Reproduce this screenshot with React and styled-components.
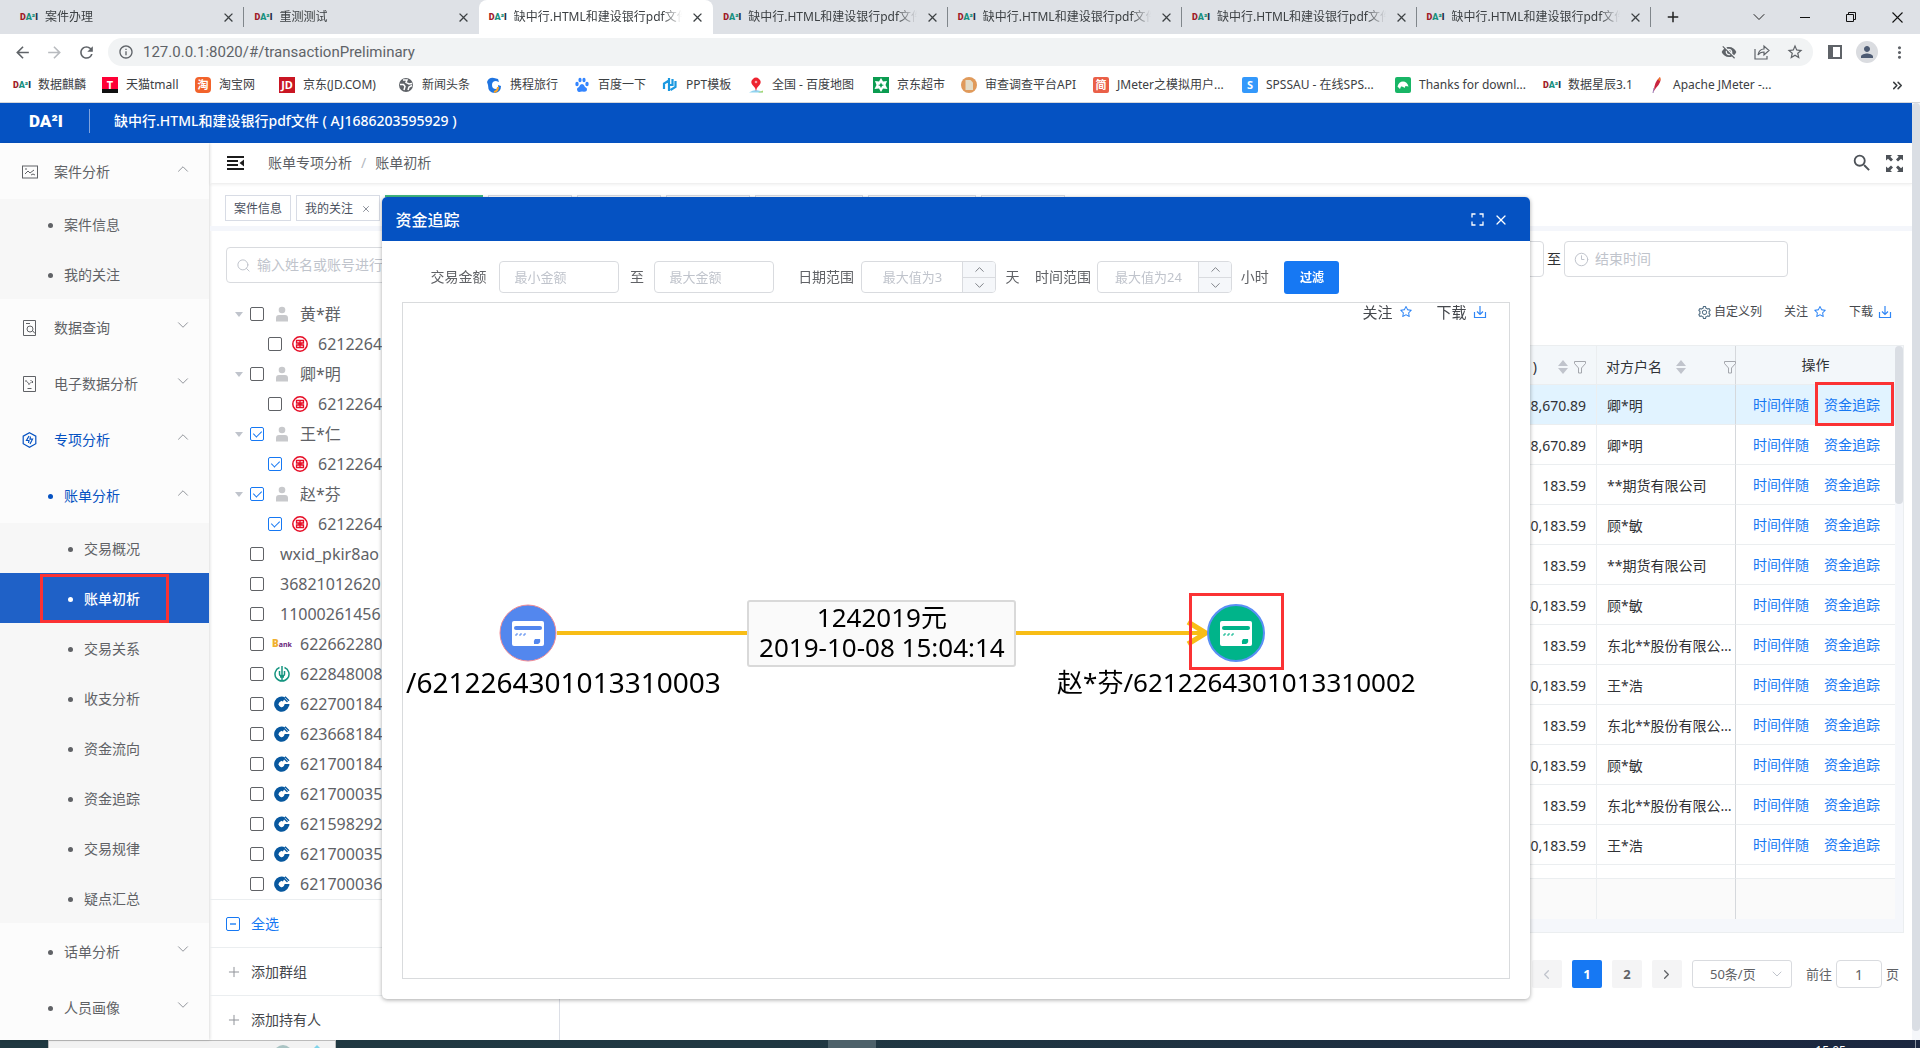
import React, { useState } from 'react';
import styled, { createGlobalStyle, css } from 'styled-components';
import {
  MdArrowBack, MdArrowForward, MdRefresh, MdInfoOutline, MdVisibilityOff, MdStarBorder,
  MdPerson, MdMoreVert, MdClose, MdAdd, MdSearch,
} from 'react-icons/md';
import { AiOutlineStar, AiOutlineSetting } from 'react-icons/ai';
import { ChevronDown, ChevronUp, ChevronLeft, ChevronRight, ChevronsRight, Plus, X, Clock3, Search } from 'lucide-react';

const BLUE = '#0552c2';
const LINK = '#1678f3';
const LINE = '#ebeef0';

const GlobalStyle = createGlobalStyle`
  * { box-sizing: border-box; }
  body {
    margin: 0;
    overflow: hidden;
    color: #606266;
    font-family: 'Noto Sans', 'Noto Sans CJK SC', sans-serif;
    font-size: 14px;
    line-height: 20px;
  }
  button, input, select { font: inherit; color: inherit; margin: 0; padding: 0; }
  button { border: 0; background: none; cursor: pointer; }
  a { color: inherit; text-decoration: none; }
  svg { flex: none; display: block; }
`;

const Page = styled.div`
  height: 100vh;
  display: flex;
  flex-direction: column;
  background: #fff;
`;

/* ---------- browser ---------- */

const TabStrip = styled.div`
  height: 34px;
  display: flex;
  padding-left: 10px;
  background: #dee1e6;
  color: #3c4043;
`;

const TabList = styled.div`
  flex: 1;
  min-width: 0;
  display: flex;
`;

const Tab = styled.div`
  flex: 1 1 0;
  min-width: 0;
  display: flex;
  align-items: center;
  gap: 8px;
  padding: 0 8px 0 10px;
  font-size: 12px;
  position: relative;
  ${(p) => p.$active && css`
    background: #fff;
    border-radius: 8px 8px 0 0;
  `}
  ${(p) => p.$divider && css`
    &::after {
      content: '';
      position: absolute;
      right: 0;
      top: 7px;
      height: 20px;
      border-right: 1px solid #80868b;
    }
  `}
`;

const TabTitle = styled.span`
  flex: 1;
  overflow: hidden;
  white-space: nowrap;
  mask-image: linear-gradient(to right, #000 88%, transparent);
`;

const WindowButtons = styled.div`
  width: 269px;
  display: flex;
  align-items: center;
  padding-left: 12px;
  color: #222;
`;

const WindowButton = styled.button`
  width: ${(p) => p.$w || 46}px;
  height: 28px;
  display: flex;
  align-items: center;
  justify-content: center;
  margin-left: ${(p) => p.$ml || 0}px;
`;

const AddressRow = styled.div`
  height: 34px;
  display: flex;
  align-items: center;
  padding: 4px 5px 2px 11px;
  color: #5f6368;
`;

const IconButton = styled.button`
  width: ${(p) => p.$w || 32}px;
  display: flex;
  justify-content: center;
  color: ${(p) => p.$color || 'inherit'};
`;

const Omnibox = styled.label`
  flex: 1;
  height: 28px;
  margin: 0 6px 0 11px;
  padding: 0 2px 0 10px;
  display: flex;
  align-items: center;
  gap: 9px;
  border-radius: 14px;
  background: #f1f3f4;
`;

const UrlInput = styled.input`
  flex: 1;
  border: 0;
  outline: 0;
  background: none;
  font-size: 15px;
  font-family: Roboto, 'Noto Sans', sans-serif;
`;

const Avatar = styled.span`
  width: 22px;
  height: 22px;
  border-radius: 50%;
  background: #dadce0;
  display: flex;
  align-items: center;
  justify-content: center;
`;

const BookmarkBar = styled.nav`
  height: 35px;
  display: flex;
  align-items: center;
  padding: 0 15px 0 13px;
  border-bottom: 1px solid #d5d7da;
  color: #3c4043;
  font-size: 12px;
`;

const Bookmark = styled.a`
  width: ${(p) => p.$w}px;
  display: flex;
  align-items: center;
  gap: 8px;
  white-space: nowrap;
`;

const Favicon = styled.span`
  width: 16px;
  height: 16px;
  flex: none;
  display: flex;
  align-items: center;
  justify-content: center;
  border-radius: ${(p) => p.$radius || 0}px;
  background: ${(p) => p.$bg || 'none'};
  color: ${(p) => p.$color || '#fff'};
  font-size: 11px;
  line-height: 16px;
  font-weight: 700;
`;

const LogoText = styled.span`
  width: ${(p) => (p.$light ? 33 : 17)}px;
  flex: none;
  font-family: Roboto, 'Liberation Sans', sans-serif;
  font-weight: 900;
  font-size: ${(p) => p.$size}px;
  line-height: 20px;
  white-space: nowrap;
  color: ${(p) => (p.$light ? '#fff' : '#1d2b45')};
  span:first-child { color: ${(p) => (p.$light ? '#fff' : '#a01c28')}; }
  span:last-child { color: ${(p) => (p.$light ? '#fff' : '#17907e')}; }
`;

const Logo = ({ size, light }) => (
  <LogoText $size={size} $light={light}><span>D</span><span>A²</span>I</LogoText>
);

const Filler = styled.span`
  flex: 1;
`;

/* ---------- app frame ---------- */

const AppArea = styled.div`
  flex: 1;
  min-height: 0;
  display: flex;
  position: relative;
`;

const AppBody = styled.div`
  flex: 1;
  min-width: 0;
  display: flex;
  flex-direction: column;
`;

const PageScroll = styled.div`
  width: 8px;
  background: #f5f7fa;
  padding-bottom: 9px;
  &::before {
    content: '';
    display: block;
    height: 100%;
    border-radius: 4px;
    background: #dadee4;
  }
`;

const AppHeader = styled.header`
  height: 40px;
  flex: none;
  display: flex;
  align-items: center;
  padding: 0 29px 4px;
  background: ${BLUE};
  color: #fff;
`;

const CaseTitle = styled.h1`
  margin: 0;
  padding-left: 24px;
  font-size: 14px;
  line-height: 24px;
  font-weight: 500;
`;

const HeaderDivider = styled.span`
  height: 24px;
  margin-left: 27px;
  border-left: 1px solid #7fa3de;
`;

const Columns = styled.div`
  flex: 1;
  min-height: 0;
  display: flex;
`;

const Sidebar = styled.nav`
  width: 209px;
  flex: none;
  overflow: hidden;
  background: #fcfcfc;
  box-shadow: 1px 0 3px rgba(0, 0, 0, 0.14);
`;

const MenuLink = styled.a`
  height: ${(p) => (p.$small ? 50 : 56)}px;
  display: flex;
  align-items: center;
  position: relative;
  padding: 2px 17px 0 ${(p) => p.$indent}px;
  background: ${(p) => (p.$active ? '#1f61c7' : p.$small ? '#f7f7f7' : 'none')};
  color: ${(p) => (p.$active ? '#fff' : p.$open ? BLUE : '#606266')};
  font-weight: ${(p) => (p.$active ? 500 : 400)};
`;

const MenuIcon = styled.span`
  width: 32px;
`;

const Dot = styled.span`
  width: 5px;
  height: 5px;
  margin-right: 11px;
  border-radius: 50%;
  background: currentColor;
`;

const MenuArrow = styled.span`
  margin: 0 0 6px auto;
  color: #909399;
`;

/* red frame drawn over a control */
const Marker = styled.span`
  position: absolute;
  inset: ${(p) => p.$inset};
  border: 3px solid #fb3234;
  pointer-events: none;
  z-index: 2;
`;

const Content = styled.div`
  flex: 1;
  min-width: 0;
  display: flex;
  flex-direction: column;
  margin-left: 1px;
`;

const TopBar = styled.div`
  height: 41px;
  flex: none;
  display: flex;
  align-items: center;
  padding: 0 2px 0 17px;
  border-bottom: 1px solid #f0f0f0;
  box-shadow: 0 1px 3px rgba(0, 0, 0, 0.06);
`;

const Breadcrumb = styled.span`
  display: flex;
  gap: 9px;
  margin-left: 24px;
  color: #5c5f64;
  i { color: #b4b8c0; font-style: normal; }
`;

const TagRow = styled.div`
  height: 47px;
  flex: none;
  display: flex;
  gap: 5px;
  padding: 11px 15px 0;
  border-bottom: 5px solid #f4f6fb;
`;

const Tag = styled.button`
  height: 26px;
  display: flex;
  align-items: center;
  gap: 8px;
  padding: 1px 8px 0;
  border: 1px solid ${(p) => (p.$active ? '#42b983' : '#d8dce5')};
  background: ${(p) => (p.$active ? '#42b983' : '#fff')};
  color: ${(p) => (p.$active ? '#fff' : '#495060')};
  font-size: 12px;
  white-space: nowrap;
`;

const TagDot = styled.span`
  width: 6px;
  height: 6px;
  border-radius: 50%;
  background: #fff;
`;

const Panels = styled.div`
  flex: 1;
  min-height: 0;
  display: flex;
`;

/* ---------- account tree ---------- */

const TreePanel = styled.section`
  width: 350px;
  flex: none;
  display: flex;
  flex-direction: column;
  overflow: hidden;
  border-right: 1px solid #dcdfe6;
`;

const FieldBox = styled.label`
  height: ${(p) => p.$h || 36}px;
  width: ${(p) => (p.$w ? `${p.$w}px` : 'auto')};
  flex: ${(p) => (p.$grow ? 1 : 'none')};
  display: flex;
  align-items: center;
  gap: 6px;
  padding: 0 ${(p) => p.$pad || 9}px;
  border: 1px solid #d9dbdf;
  border-radius: 4px;
  background: #fff;
  color: #c0c4cc;
`;

const FieldInput = styled.input`
  flex: 1;
  width: 100%;
  min-width: 0;
  border: 0;
  outline: 0;
  background: none;
  color: #606266;
  font-size: ${(p) => p.$size || 14}px;
  text-align: ${(p) => p.$align || 'left'};
  appearance: textfield;
  &::placeholder { color: #c0c4cc; }
  &::-webkit-inner-spin-button { display: none; }
`;

const TreeSearch = styled.div`
  padding: 16px;
`;

const Tree = styled.ul`
  flex: none;
  margin: 0;
  padding: 0;
  list-style: none;
  font-size: 16px;
`;

const TreeItem = styled.li`
  height: 30px;
  display: flex;
  align-items: center;
  padding-left: ${(p) => (p.$child ? 41 : 23)}px;
`;

const Caret = styled.span`
  width: 17px;
  &::before {
    content: '';
    display: ${(p) => (p.$show ? 'block' : 'none')};
    width: 0;
    margin-left: 2px;
    border: 4px solid transparent;
    border-top: 5px solid #c0c4cc;
    border-bottom: 0;
  }
`;

const CheckLabel = styled.label`
  display: flex;
  align-items: center;
  white-space: nowrap;
`;

const CheckBox = styled.input`
  appearance: none;
  width: 14px;
  height: 14px;
  flex: none;
  position: relative;
  border: 1px solid #606266;
  border-radius: 2px;
  background: #fff;
  &:checked { border-color: ${LINK}; }
  &:checked::after {
    content: '';
    position: absolute;
    left: 4px;
    top: 1px;
    width: 4px;
    height: 7px;
    border: solid ${LINK};
    border-width: 0 1px 1px 0;
    transform: rotate(45deg);
  }
  ${(p) => p.$partial && css`
    border-color: ${LINK};
    &::before {
      content: '';
      position: absolute;
      left: 3px;
      top: 5px;
      width: 6px;
      height: 2px;
      background: #62a6f8;
    }
  `}
`;

const TreeIcon = styled.span`
  width: 16px;
  margin: 0 10px;
  display: flex;
  justify-content: center;
`;

const TreeText = styled.span`
  margin-left: ${(p) => (p.$bare ? 16 : 0)}px;
`;

const TreeFoot = styled.div`
  height: 48px;
  flex: none;
  display: flex;
  align-items: center;
  padding: 0 16px;
  border-top: 1px solid ${LINE};
  color: ${(p) => (p.$blue ? LINK : '#45484d')};
`;

const FootText = styled.span`
  margin-left: 11px;
`;

const FootButton = styled.button`
  display: flex;
  align-items: center;
  svg { color: #909399; margin-right: -2px; }
`;

/* ---------- bill table ---------- */

const MainPanel = styled.section`
  flex: 1;
  min-width: 0;
  display: flex;
  flex-direction: column;
  padding: 10px 8px 52px 16px;
`;

const DateRow = styled.div`
  display: flex;
  align-items: center;
  gap: 3px;
  padding-right: 116px;
  color: #303133;
`;

const ToText = styled.span`
  width: 14px;
`;

const Tools = styled.div`
  height: 68px;
  flex: none;
  display: flex;
  align-items: center;
  justify-content: flex-end;
  gap: 22px;
  padding: 2px 12px 0 0;
  font-size: 12px;
  color: #45484d;
`;

const ToolButton = styled.button`
  display: flex;
  align-items: center;
  gap: ${(p) => p.$gap || 5}px;
  color: #45484d;
`;

const TableWrap = styled.div`
  flex: 1;
  min-height: 0;
  display: flex;
  padding-bottom: 13px;
  border: 1px solid ${LINE};
  background: #f5f7fb;
`;

const TableView = styled.div`
  flex: 1;
  min-width: 0;
  overflow: hidden;
  background: #fff;
`;

const TableScroll = styled.div`
  width: 8px;
  &::before {
    content: '';
    display: block;
    height: 158px;
    border-radius: 4px;
    background: #dadee4;
  }
`;

const Table = styled.table`
  width: 100%;
  table-layout: fixed;
  border-spacing: 0;
  color: #303236;
`;

const HeadCell = styled.th`
  width: ${(p) => (p.$w ? `${p.$w}px` : 'auto')};
  height: 39px;
  padding: ${(p) => (p.$center ? '0' : '4px 5px 0 9px')};
  text-align: ${(p) => (p.$center ? 'center' : 'left')};
  font-weight: 400;
  background: #f3f7fa;
  border-right: 1px solid ${(p) => (p.$fixed ? '#d5d8dc' : LINE)};
  border-bottom: 1px solid ${LINE};
  &:last-child { border-right: 0; }
`;

const HeadInner = styled.span`
  display: flex;
  align-items: center;
  justify-content: ${(p) => (p.$end ? 'flex-end' : 'flex-start')};
  gap: ${(p) => (p.$end ? 6 : 14)}px;
  margin-right: ${(p) => (p.$end ? 5 : -6)}px;
  white-space: nowrap;
  svg:last-child { margin-left: ${(p) => (p.$end ? 0 : 'auto')}; }
`;

const HeadText = styled.span`
  margin-right: ${(p) => p.$mr || 0}px;
`;

const Cell = styled.td`
  height: 40px;
  padding: ${(p) => p.$pad || '2px 0 0 10px'};
  overflow: hidden;
  white-space: nowrap;
  text-overflow: ellipsis;
  text-align: ${(p) => (p.$right ? 'right' : 'left')};
  border-right: 1px solid ${(p) => (p.$fixed ? '#d5d8dc' : LINE)};
  border-bottom: 1px solid ${LINE};
  &:last-child { border-right: 0; overflow: visible; }
`;

const Row = styled.tr`
  background: ${(p) => (p.$current ? '#e1f3ff' : '#fff')};
`;

const FootCell = styled(Cell)`
  position: sticky;
  bottom: 0;
  height: 41px;
  background: #fafafa;
  border-top: 1px solid ${LINE};
  border-bottom: 0;
`;

const OpLinks = styled.span`
  display: flex;
  gap: 15px;
  color: ${LINK};
`;

const OpLink = styled.a`
  position: relative;
`;

const Pagination = styled.nav`
  flex: none;
  display: flex;
  align-items: center;
  justify-content: flex-end;
  gap: 10px;
  margin-top: 27px;
  padding-right: 5px;
  font-size: 13px;
`;

const PageButton = styled.button`
  width: 30px;
  height: 28px;
  display: flex;
  align-items: center;
  justify-content: center;
  border-radius: 2px;
  background: ${(p) => (p.$active ? LINK : '#f4f4f5')};
  color: ${(p) => (p.$active ? '#fff' : p.$dim ? '#c0c4cc' : '#606266')};
  font-weight: 700;
`;

const SizeBox = styled.span`
  display: flex;
  align-items: center;
  width: 100px;
  height: 28px;
  border: 1px solid #d9dbdf;
  border-radius: 3px;
  color: #c0c4cc;
  svg { margin-left: -22px; pointer-events: none; }
`;

const SizeSelect = styled.select`
  appearance: none;
  width: 98px;
  height: 26px;
  padding-left: 17px;
  border: 0;
  outline: 0;
  background: none;
  color: #606266;
`;

const Jump = styled.label`
  display: flex;
  align-items: center;
  gap: 4px;
  margin-left: 4px;
`;

const JumpInput = styled.input`
  width: 46px;
  height: 28px;
  border: 1px solid #d9dbdf;
  border-radius: 4px;
  text-align: center;
  font-size: 14px;
`;

/* ---------- trace dialog ---------- */

const Overlay = styled.div`
  position: absolute;
  inset: 0 8px 0 0;
  display: flex;
  justify-content: center;
  padding: 94px 0 41px;
  z-index: 5;
`;

const Dialog = styled.section`
  width: 60%;
  display: flex;
  flex-direction: column;
  padding-bottom: 20px;
  border-radius: 5px;
  background: #fff;
  box-shadow: 0 1px 4px rgba(0, 0, 0, 0.35);
  overflow: hidden;
`;

const DialogHead = styled.header`
  height: 44px;
  flex: none;
  display: flex;
  align-items: center;
  gap: 9px;
  padding: 1px 21px 0 13px;
  background: ${BLUE};
  color: #fff;
`;

const DialogTitle = styled.h2`
  flex: 1;
  margin: 0;
  font-size: 16px;
  line-height: 24px;
  font-weight: 500;
`;

const FilterForm = styled.form`
  height: 61px;
  flex: none;
  display: flex;
  align-items: flex-start;
  padding: 20px 48px 0;
`;

const FormText = styled.label`
  width: ${(p) => p.$w}px;
  line-height: 32px;
  flex: none;
  white-space: nowrap;
  text-align: ${(p) => p.$align || 'left'};
`;

const NumberBox = styled.span`
  width: 135px;
  height: 32px;
  display: flex;
  flex: none;
  border: 1px solid #d9dbdf;
  border-radius: 4px;
  overflow: hidden;
`;

const Steps = styled.span`
  width: 33px;
  display: flex;
  flex-direction: column;
  border-left: 1px solid #d9dbdf;
  background: #f5f7fa;
  color: #808389;
`;

const Step = styled.button`
  flex: 1;
  display: flex;
  align-items: center;
  justify-content: center;
  & + & { border-top: 1px solid #d9dbdf; }
`;

const FilterButton = styled.button`
  width: 55px;
  height: 33px;
  flex: none;
  border-radius: 3px;
  background: ${LINK};
  color: #fff;
  font-size: 12px;
  font-weight: 700;
`;

const Canvas = styled.div`
  flex: 1;
  position: relative;
  margin: 0 20px;
  border: 1px solid #d9dbdd;
  overflow: hidden;
  color: #000;
`;

const CanvasTools = styled.div`
  display: flex;
  justify-content: flex-end;
  gap: 24px;
  padding-right: 22px;
  font-size: 15px;
  line-height: 18px;
`;

const Edge = styled.svg`
  position: absolute;
  left: 0;
  top: 0;
`;

const EdgeLabel = styled.div`
  position: absolute;
  left: 344px;
  top: 297px;
  width: 269px;
  height: 67px;
  border: 2px solid #d9d9d9;
  border-radius: 3px;
  background: #fafafa;
  text-align: center;
  font-size: 26px;
  line-height: 30px;
  white-space: nowrap;
`;

const NodeLabel = styled.div`
  position: absolute;
  left: ${(p) => p.$x}px;
  top: 359px;
  transform: translateX(-50%);
  font-size: ${(p) => p.$size}px;
  line-height: 40px;
  white-space: nowrap;
`;

const NodeMarker = styled(Marker)`
  inset: auto;
  left: 786px;
  top: 290px;
  width: 95px;
  height: 77px;
`;

/* ---------- task bar ---------- */

const TaskBar = styled.footer`
  height: 8px;
  flex: none;
  display: flex;
  overflow: hidden;
  background: linear-gradient(to right, #1f3840, #203842 40%, #1b2740);
  color: #fff;
  font-size: 12px;
`;

const TaskSearch = styled.div`
  width: 288px;
  margin-left: 48px;
  border: 1px solid #bbb;
  border-bottom: 0;
  background: #f2f2f2;
  display: flex;
  justify-content: flex-end;
  gap: 22px;
  padding: 4px 14px 0 0;
`;

const TaskApp = styled.div`
  width: 48px;
  margin-left: 492px;
  background: #4d616a;
`;

const TaskClock = styled.div`
  margin-left: auto;
  padding-right: 69px;
  line-height: 20px;
  padding-top: 1px;
`;

const TaskEdge = styled.div`
  width: 5px;
  border-left: 1px solid #8a93a0;
`;

/* ---------- icons ---------- */

const CaseIcon = () => (
  <svg width="16" height="16" viewBox="0 0 16 16" fill="none" stroke="currentColor">
    <rect x="0.5" y="2" width="15" height="12" />
    <path d="M3 10l3-3 2 2 4-3M9 11l2-1 2 1M3 5h2" />
  </svg>
);
const QueryIcon = () => (
  <svg width="16" height="16" viewBox="0 0 16 16" fill="none" stroke="currentColor">
    <path d="M1.5 0.5h12v15h-12zM4 3.5h4M10.5 10.5l2.5 3" />
    <circle cx="8" cy="9" r="3" />
  </svg>
);
const DataIcon = () => (
  <svg width="16" height="16" viewBox="0 0 16 16" fill="none" stroke="currentColor">
    <path d="M1.5 0.5h12v15h-12zM5.5 12.5h4" />
    <path d="M4 4v2M7 7v2M9 4v1M10.5 5v2M5 5.500l1.500 2M8 7.500l2-2" />
  </svg>
);
const SpecialIcon = () => (
  <svg width="16" height="16" viewBox="0 0 16 16" fill="none" stroke="currentColor" strokeWidth="1.200">
    <path d="M7.500 0.700l6.300 3.500v7.500l-6.300 3.500-6.300-3.500V4.200z" />
    <path d="M7 4L4.500 8.500H7L6.500 11M8.500 4.500L8 7.200h2.500L8 12" />
  </svg>
);
const PersonIcon = () => (
  <svg width="14" height="16" viewBox="0 0 14 16" fill="#c8c9cc">
    <circle cx="7" cy="4" r="3.300" />
    <path d="M1 15.500v-3.500q0-3 3-3h6q3 0 3 3v3.500z" />
  </svg>
);
const IcbcIcon = () => (
  <svg width="16" height="16" viewBox="0 0 16 16" fill="none" stroke="#e60d26">
    <circle cx="8" cy="8" r="7.200" strokeWidth="1.500" />
    <path d="M4 4.500h8M4 11.500h8M4.500 4v3h2.500v2H4.500v3M11.500 4v3H9v2h2.500v3M8 5v6" strokeWidth="1.300" />
  </svg>
);
const CcbIcon = () => (
  <svg width="16" height="16" viewBox="0 0 16 16">
    <path d="M10 3.500A5.200 5.200 0 1 0 12.600 9.800" fill="none" stroke="#07589f" strokeWidth="4.600" />
    <path d="M10 8h5.500l-.5 2.500h-4z" fill="#07589f" />
    <path d="M7.500 4.800l3.200 3.400-3.200 3.400-3.200-3.400z" fill="#fff" />
    <path d="M9 1.500l4.500 4.500M11 .8l4 4" stroke="#07589f" strokeWidth="1.400" />
  </svg>
);
const AbcIcon = () => (
  <svg width="16" height="16" viewBox="0 0 16 16" fill="none" stroke="#14947f">
    <path d="M5.500 1.500a7 7 0 1 0 5 0" strokeWidth="1.500" />
    <path d="M8 0v15M5.500 5v3q0 2 2.500 2t2.500-2V5M6 11h4" strokeWidth="1.500" />
  </svg>
);
const DownloadIcon = ({ size = 14 }) => (
  <svg width={size} height={size} viewBox="0 0 14 14" fill="none" stroke="#2f86f6" strokeWidth="1.200">
    <path d="M1.500 7v5.500h11V7M7 1v8.500M4 6.500l3 3 3-3" />
  </svg>
);
const SortIcon = () => (
  <svg width="10" height="14" viewBox="0 0 10 14" fill="#c0c4cc">
    <path d="M5 0l5 6H0zM5 14l5-6H0z" />
  </svg>
);
const FunnelIcon = () => (
  <svg width="12" height="13" viewBox="0 0 12 13" fill="none" stroke="#a4a7ad">
    <path d="M0.500 0.500h11v2L7.500 7v5h-3V7L0.500 2.500z" />
  </svg>
);
const FoldIcon = () => (
  <svg width="17" height="16" viewBox="0 0 17 16" fill="#1c1c1c">
    <path d="M0 1h17v2H0zM0 5h11v2H0zM0 9h11v2H0zM0 13h17v2H0zM17 4.500v7L12.500 8z" />
  </svg>
);
const FullIcon = () => (
  <svg width="17" height="17" viewBox="0 0 17 17" fill="#4d5258">
    <path d="M0 0h6L4.300 1.700 7 4.500 5 6.500 2 3.700 0 5.500zM17 0h-6l1.700 1.700L10 4.500l2 2 3-2.800 2 1.800zM0 17h6l-1.700-1.700L7 12.500l-2-2-3 2.800-2-1.800zM17 17h-6l1.700-1.700L10 12.500l2-2 3 2.800 2-1.800z" />
  </svg>
);
const CornersIcon = () => (
  <svg width="13" height="13" viewBox="0 0 13 13" fill="none" stroke="#fff" strokeWidth="1.300">
    <path d="M1 4.500V1h3.500M8.500 1H12v3.500M12 8.500V12H8.500M4.500 12H1V8.500" />
  </svg>
);
const ShareIcon = () => (
  <svg width="16" height="16" viewBox="0 0 16 16" fill="none" stroke="currentColor" strokeWidth="1.200">
    <path d="M1 5v10h12v-3M4 11q1-6 6-6V2l5 4.500-5 4.500V8Q6 8 4 11z" />
  </svg>
);

const Favicons = {
  logo: <Logo size={9} />,
  tmall: <Favicon $bg="linear-gradient(#ff0036 75%, #111 75%)">T</Favicon>,
  taobao: <Favicon $bg="#f2632b" $radius={4}>淘</Favicon>,
  jd: <Favicon $bg="#c91623">JD</Favicon>,
  globe: (
    <svg width="16" height="16" viewBox="0 0 16 16">
      <circle cx="8" cy="8" r="7" fill="#5f6368" />
      <path d="M2 7.500l3.500 0 1.500 2-1 3.500M5 3l4 0-1 2.500 3 1.500 3-.5M14 8.500l-3 1.500-1 3" stroke="#fff" fill="none" strokeWidth="1.500" />
    </svg>
  ),
  ctrip: (
    <svg width="16" height="16" viewBox="0 0 16 16">
      <path d="M1 5Q3 0 8 1l4 1 1 3-3-1Q6 4 6 8t4 4q3-1 2-4l3 1q0 6-6 7-7 0-7-8z" fill="#1f74e0" />
      <path d="M8 15q4-1 4-5" stroke="#fca321" strokeWidth="2" fill="none" />
    </svg>
  ),
  baidu: (
    <svg width="16" height="16" viewBox="0 0 16 16" fill="#3385ff">
      <ellipse cx="3" cy="7" rx="1.700" ry="2.200" /><ellipse cx="6" cy="3" rx="1.600" ry="2.200" />
      <ellipse cx="10" cy="3" rx="1.600" ry="2.200" /><ellipse cx="13" cy="7" rx="1.700" ry="2.200" />
      <path d="M8 7q2 0 3 3 3 1 1.500 4-1 1-4.500.5Q4 15.500 3.500 14 2 11 5 10 6 7 8 7z" />
    </svg>
  ),
  ppt: (
    <svg width="16" height="16" viewBox="0 0 16 16" fill="none" stroke="#1a98e0" strokeWidth="2.200">
      <path d="M2 12V6.500l5-3M7 1v13M7 8h4M10.500 2v7M13.500 4v6l-5 3" />
    </svg>
  ),
  map: (
    <svg width="16" height="16" viewBox="0 0 16 16">
      <path d="M1 15.500q7-5 14 0z" fill="#8fd3f0" />
      <path d="M10 15.500l5-2v2z" fill="#a5d86b" />
      <path d="M8 14Q7 10 4.500 8a4.500 4.500 0 1 1 7 0Q9 10 8 14z" fill="#ee2430" />
      <circle cx="8" cy="5" r="1.300" fill="#f7a5a8" />
    </svg>
  ),
  market: (
    <svg width="16" height="16" viewBox="0 0 16 16">
      <rect width="16" height="16" fill="#0b9b50" />
      <path d="M8 1l2 3.500L14 4l-1.500 4 2 4-4.500-.5L8 15l-2-3.500-4.500.5 2-4L2 4l4 .5z" fill="#fff" />
      <path d="M8 5.500l1 2 2 .5-2 1-1 2-1-2-2-1 2-.5z" fill="#0b9b50" />
    </svg>
  ),
  api: (
    <svg width="16" height="16" viewBox="0 0 16 16">
      <circle cx="8" cy="8" r="8" fill="#e09a5b" />
      <path d="M4.500 3h5l2.500 2.500V13H4.500z" fill="#e3dcc8" />
    </svg>
  ),
  jian: <Favicon $bg="#ea6048" $radius={2}>简</Favicon>,
  spss: <Favicon $bg="#3398fb" $radius={2}>S</Favicon>,
  thanks: (
    <svg width="16" height="16" viewBox="0 0 16 16">
      <rect width="16" height="16" rx="2" fill="#18b566" />
      <path d="M2.500 9.500Q4 4.500 8 4.500t5.500 5l-3-.5-1 2q-1.500-2-3.500-1.500L5 12z" fill="#fff" />
    </svg>
  ),
  feather: (
    <svg width="14" height="16" viewBox="0 0 14 16">
      <path d="M3 14Q3 5 9 0q2 5-4 11z" fill="#c9243f" />
      <path d="M7 3l2-3q1 2 0 4z" fill="#f58220" />
      <path d="M3 11l-1 5" stroke="#9a76b0" />
    </svg>
  ),
};

/* ---------- data ---------- */

const LONG_TITLE = '缺中行.HTML和建设银行pdf文件';
const tabs = ['案件办理', '重测测试', LONG_TITLE, LONG_TITLE, LONG_TITLE, LONG_TITLE, LONG_TITLE];

const bookmarks = [
  ['logo', '数据麒麟', 89], ['tmall', '天猫tmall', 93], ['taobao', '淘宝网', 84],
  ['jd', '京东(JD.COM)', 119], ['globe', '新闻头条', 88], ['ctrip', '携程旅行', 88],
  ['baidu', '百度一下', 88], ['ppt', 'PPT模板', 86], ['map', '全国 - 百度地图', 125],
  ['market', '京东超市', 88], ['api', '审查调查平台API', 132], ['jian', 'JMeter之模拟用户...', 149],
  ['spss', 'SPSSAU - 在线SPS...', 153], ['thanks', 'Thanks for downl...', 148],
  ['logo', '数据星辰3.1', 108], ['feather', 'Apache JMeter -...', 140],
];

const menu = [
  { text: '案件分析', icon: <CaseIcon />, arrow: 'up' },
  { text: '案件信息', level: 1, small: true },
  { text: '我的关注', level: 1, small: true },
  { text: '数据查询', icon: <QueryIcon />, arrow: 'down' },
  { text: '电子数据分析', icon: <DataIcon />, arrow: 'down' },
  { text: '专项分析', icon: <SpecialIcon />, arrow: 'up', open: true },
  { text: '账单分析', level: 1, arrow: 'up', open: true },
  { text: '交易概况', level: 2, small: true },
  { text: '账单初析', level: 2, small: true, active: true },
  { text: '交易关系', level: 2, small: true },
  { text: '收支分析', level: 2, small: true },
  { text: '资金流向', level: 2, small: true },
  { text: '资金追踪', level: 2, small: true },
  { text: '交易规律', level: 2, small: true },
  { text: '疑点汇总', level: 2, small: true },
  { text: '话单分析', level: 1, arrow: 'down' },
  { text: '人员画像', level: 1, arrow: 'down' },
];
const indents = [22, 48, 68];

const tags = ['案件信息', '我的关注', '账单初析', '交易概况', '交易关系', '收支分析', '电子数据分析', '账单专项分析', '资金流向'];

const accounts = [
  { text: '黄*群', icon: 'person' },
  { text: '6212264', icon: 'icbc', child: true },
  { text: '卿*明', icon: 'person' },
  { text: '6212264', icon: 'icbc', child: true },
  { text: '王*仁', icon: 'person', checked: true },
  { text: '6212264', icon: 'icbc', child: true, checked: true },
  { text: '赵*芬', icon: 'person', checked: true },
  { text: '6212264', icon: 'icbc', child: true, checked: true },
  { text: 'wxid_pkir8ao' },
  { text: '36821012620' },
  { text: '11000261456' },
  { text: '622662280', icon: 'bank' },
  { text: '622848008', icon: 'abc' },
  { text: '622700184', icon: 'ccb' },
  { text: '623668184', icon: 'ccb' },
  { text: '621700184', icon: 'ccb' },
  { text: '621700035', icon: 'ccb' },
  { text: '621598292', icon: 'ccb' },
  { text: '621700035', icon: 'ccb' },
  { text: '621700036', icon: 'ccb' },
];

const BankWord = styled.span`
  font-size: 7px;
  line-height: 16px;
  font-weight: 700;
  color: #6b1f7c;
  b { color: #f0b02f; font-size: 10px; }
`;

const treeIcons = {
  person: <PersonIcon />,
  icbc: <IcbcIcon />,
  ccb: <CcbIcon />,
  abc: <AbcIcon />,
  bank: <BankWord><b>B</b>ank</BankWord>,
};

const bills = [
  ['18,670.89', '卿*明'],
  ['18,670.89', '卿*明'],
  ['183.59', '**期货有限公司'],
  ['60,183.59', '顾*敏'],
  ['183.59', '**期货有限公司'],
  ['40,183.59', '顾*敏'],
  ['183.59', '东北**股份有限公司分公司'],
  ['00,183.59', '王*浩'],
  ['183.59', '东北**股份有限公司分公司'],
  ['90,183.59', '顾*敏'],
  ['183.59', '东北**股份有限公司分公司'],
  ['00,183.59', '王*浩'],
  ['183.59', '东北**股份有限公司分公司'],
];

/* ---------- parts ---------- */

const CardNode = ({ x, y, r, fill, ring, ringWidth }) => (
  <g transform={`translate(${x} ${y})`}>
    <circle r={r} fill={fill} stroke={ring} strokeWidth={ringWidth} />
    <rect x="-16" y="-12" width="32" height="25" rx="2" fill="#fff" />
    <rect x="-14" y="-7" width="28" height="4" rx="2" fill={fill} />
    <path d="M-12 3v-2h2M-8 3v-2h2M-4 3v-2h2" fill="none" stroke={fill} />
    <path d="M7 6h5q1 4-2 5H6q-1-3 1-5z" fill={fill} />
  </g>
);

const NumberField = ({ id, placeholder }) => (
  <NumberBox>
    <FieldInput id={id} type="number" placeholder={placeholder} $size={13} $align="center" />
    <Steps>
      <Step type="button" aria-label="增加"><ChevronUp size={15} strokeWidth={1.6} /></Step>
      <Step type="button" aria-label="减少"><ChevronDown size={15} strokeWidth={1.6} /></Step>
    </Steps>
  </NumberBox>
);

const Browser = () => (
  <>
    <TabStrip>
      <TabList>
        {tabs.map((title, i) => (
          <Tab key={i} $active={i === 2} $divider={i !== 1 && i !== 2}>
            <Logo size={9} />
            <TabTitle>{title}</TabTitle>
            <MdClose size={15} />
          </Tab>
        ))}
      </TabList>
      <WindowButtons>
        <WindowButton $w={20} aria-label="新标签页"><MdAdd size={18} /></WindowButton>
        <WindowButton $ml={53} aria-label="搜索标签页"><ChevronDown size={20} strokeWidth={1.2} /></WindowButton>
        <WindowButton aria-label="最小化">
          <svg width="10" height="10"><path d="M0 5.500h10" stroke="#111" /></svg>
        </WindowButton>
        <WindowButton aria-label="还原">
          <svg width="10" height="10" fill="none" stroke="#111"><path d="M.5 2.500h7v7h-7zM2.500 2.500v-2h7v7h-2" /></svg>
        </WindowButton>
        <WindowButton aria-label="关闭">
          <svg width="11" height="11"><path d="M.5 .5l10 10M10.500 .5l-10 10" stroke="#111" strokeWidth="1.100" /></svg>
        </WindowButton>
      </WindowButtons>
    </TabStrip>
    <AddressRow>
      <IconButton $w={22} aria-label="后退"><MdArrowBack size={19} /></IconButton>
      <IconButton $w={42} $color="#b8bbbf" aria-label="前进"><MdArrowForward size={19} /></IconButton>
      <IconButton $w={22} aria-label="刷新"><MdRefresh size={19} /></IconButton>
      <Omnibox>
        <MdInfoOutline size={16} />
        <UrlInput aria-label="地址" defaultValue="127.0.0.1:8020/#/transactionPreliminary" />
        <IconButton aria-label="Cookie"><MdVisibilityOff size={16} /></IconButton>
        <IconButton $w={16} aria-label="分享"><ShareIcon /></IconButton>
        <IconButton aria-label="收藏"><MdStarBorder size={18} /></IconButton>
      </Omnibox>
      <IconButton aria-label="侧边栏">
        <svg width="14" height="14"><path d="M1 1h12v12H1z" fill="none" stroke="#5f6368" strokeWidth="2" /><path d="M1 1h4v12H1z" fill="#5f6368" /></svg>
      </IconButton>
      <IconButton aria-label="个人资料"><Avatar><MdPerson size={18} color="#4d5b73" /></Avatar></IconButton>
      <IconButton aria-label="更多"><MdMoreVert size={19} /></IconButton>
    </AddressRow>
    <BookmarkBar>
      {bookmarks.map(([icon, text, w]) => (
        <Bookmark key={text} href="#" $w={w}>{Favicons[icon]}{text}</Bookmark>
      ))}
      <Filler />
      <ChevronsRight size={15} strokeWidth={2.5} />
    </BookmarkBar>
  </>
);

const Menu = () => (
  <Sidebar>
    {menu.map((m) => (
      <MenuLink key={m.text} href="#" $small={m.small} $open={m.open} $active={m.active} $indent={indents[m.level || 0]}>
        {m.icon ? <MenuIcon>{m.icon}</MenuIcon> : <Dot />}
        {m.text}
        {m.arrow && (
          <MenuArrow>
            {m.arrow === 'up' ? <ChevronUp size={18} strokeWidth={1.3} /> : <ChevronDown size={18} strokeWidth={1.3} />}
          </MenuArrow>
        )}
        {m.active && <Marker $inset="1px 40px 0 40px" />}
      </MenuLink>
    ))}
  </Sidebar>
);

const AccountTree = () => (
  <TreePanel>
    <TreeSearch>
      <FieldBox>
        <Search size={15} strokeWidth={1.6} />
        <FieldInput aria-label="搜索账号" placeholder="输入姓名或账号进行查询" />
      </FieldBox>
    </TreeSearch>
    <Tree>
      {accounts.map((a, i) => (
        <TreeItem key={i} $child={a.child}>
          <Caret $show={a.icon === 'person'} />
          <CheckLabel>
            <CheckBox type="checkbox" defaultChecked={a.checked} />
            {a.icon && <TreeIcon>{treeIcons[a.icon]}</TreeIcon>}
            <TreeText $bare={!a.icon}>{a.text}</TreeText>
          </CheckLabel>
        </TreeItem>
      ))}
    </Tree>
    <TreeFoot $blue>
      <CheckLabel><CheckBox type="checkbox" $partial /><FootText>全选</FootText></CheckLabel>
    </TreeFoot>
    <TreeFoot><FootButton><Plus size={16} strokeWidth={1.5} /><FootText>添加群组</FootText></FootButton></TreeFoot>
    <TreeFoot><FootButton><Plus size={16} strokeWidth={1.5} /><FootText>添加持有人</FootText></FootButton></TreeFoot>
  </TreePanel>
);

const BillPanel = () => (
  <MainPanel>
    <DateRow>
      <FieldBox $grow><Clock3 size={15} strokeWidth={1.6} /><FieldInput aria-label="开始时间" placeholder="开始时间" /></FieldBox>
      <ToText>至</ToText>
      <FieldBox $w={224}><Clock3 size={15} strokeWidth={1.6} /><FieldInput aria-label="结束时间" placeholder="结束时间" /></FieldBox>
    </DateRow>
    <Tools>
      <ToolButton $gap={2}><AiOutlineSetting size={15} color="#4d6a80" />自定义列</ToolButton>
      <ToolButton>关注<AiOutlineStar size={14} color="#2f86f6" /></ToolButton>
      <ToolButton>下载<DownloadIcon /></ToolButton>
    </Tools>
    <TableWrap>
      <TableView>
        <Table>
          <thead>
            <tr>
              <HeadCell>交易时间</HeadCell>
              <HeadCell $w={140}>
                <HeadInner $end><HeadText $mr={15}>金额(元 )</HeadText><SortIcon /><FunnelIcon /></HeadInner>
              </HeadCell>
              <HeadCell $w={139} $fixed>
                <HeadInner><HeadText>对方户名</HeadText><SortIcon /><FunnelIcon /></HeadInner>
              </HeadCell>
              <HeadCell $w={159} $center>操作</HeadCell>
            </tr>
          </thead>
          <tbody>
            {bills.map(([amount, name], i) => (
              <Row key={i} $current={i === 0}>
                <Cell />
                <Cell $right $pad="2px 10px 0">{amount}</Cell>
                <Cell $fixed>{name}</Cell>
                <Cell $pad="0 0 0 17px">
                  <OpLinks>
                    <OpLink href="#">时间伴随</OpLink>
                    <OpLink href="#">资金追踪{i === 0 && <Marker $inset="-13px -14px -11px -9px" />}</OpLink>
                  </OpLinks>
                </Cell>
              </Row>
            ))}
          </tbody>
          <tfoot>
            <tr><FootCell /><FootCell /><FootCell $fixed /><FootCell /></tr>
          </tfoot>
        </Table>
      </TableView>
      <TableScroll />
    </TableWrap>
    <Pagination>
      <PageButton $dim aria-label="上一页"><ChevronLeft size={15} /></PageButton>
      <PageButton $active>1</PageButton>
      <PageButton>2</PageButton>
      <PageButton aria-label="下一页"><ChevronRight size={15} /></PageButton>
      <SizeBox>
        <SizeSelect aria-label="每页条数"><option>50条/页</option><option>100条/页</option></SizeSelect>
        <ChevronDown size={16} strokeWidth={1.5} />
      </SizeBox>
      <Jump>前往<JumpInput defaultValue="1" />页</Jump>
    </Pagination>
  </MainPanel>
);

const TraceDialog = ({ onClose }) => (
  <Overlay>
    <Dialog role="dialog" aria-label="资金追踪">
      <DialogHead>
        <DialogTitle>资金追踪</DialogTitle>
        <IconButton $w={13} aria-label="全屏"><CornersIcon /></IconButton>
        <IconButton $w={16} aria-label="关闭" onClick={onClose}><X size={16} strokeWidth={1.8} /></IconButton>
      </DialogHead>
      <FilterForm onSubmit={(e) => e.preventDefault()}>
        <FormText $w={69} htmlFor="min">交易金额</FormText>
        <FieldBox $h={32} $w={120} $pad={14}><FieldInput id="min" placeholder="最小金额" $size={13} /></FieldBox>
        <FormText $w={35} $align="center" htmlFor="max">至</FormText>
        <FieldBox $h={32} $w={120} $pad={14}><FieldInput id="max" placeholder="最大金额" $size={13} /></FieldBox>
        <FormText $w={87} $align="right" htmlFor="days"><span>日期范围&nbsp;&nbsp;</span></FormText>
        <NumberField id="days" placeholder="最大值为3" />
        <FormText $w={32} $align="center" htmlFor="days">天</FormText>
        <FormText $w={69} $align="center" htmlFor="hours">时间范围</FormText>
        <NumberField id="hours" placeholder="最大值为24" />
        <FormText $w={52} $align="center" htmlFor="hours">小时&nbsp;&nbsp;</FormText>
        <FilterButton>过滤</FilterButton>
      </FilterForm>
      <Canvas>
        <CanvasTools>
          <ToolButton $gap={6}>关注<AiOutlineStar size={14} color="#2f86f6" /></ToolButton>
          <ToolButton $gap={6}>下载<DownloadIcon /></ToolButton>
        </CanvasTools>
        <Edge width="1000" height="420">
          <path d="M154 330H800" stroke="#f8bd16" strokeWidth="4" />
          <path d="M785 319l18 11-18 11" fill="none" stroke="#f8bd16" strokeWidth="5" />
          <CardNode x={125} y={330} r={28} fill="#5387ee" ring="#f08a94" ringWidth={1} />
          <CardNode x={833} y={330} r={28} fill="#00b48a" ring="#5a8ff5" ringWidth={2} />
        </Edge>
        <EdgeLabel>1242019元<br />2019-10-08 15:04:14</EdgeLabel>
        <NodeLabel $x={160} $size={28}>/6212264301013310003</NodeLabel>
        <NodeLabel $x={833} $size={26}>赵*芬/6212264301013310002</NodeLabel>
        <NodeMarker />
      </Canvas>
    </Dialog>
  </Overlay>
);

const App = () => {
  const [open, setOpen] = useState(true);

  return (
    <Page>
      <GlobalStyle />
      <Browser />
      <AppArea>
        <AppBody>
          <AppHeader>
            <Logo size={17} light />
            <HeaderDivider />
            <CaseTitle>缺中行.HTML和建设银行pdf文件 ( AJ1686203595929 )</CaseTitle>
          </AppHeader>
          <Columns>
            <Menu />
            <Content>
              <TopBar>
                <FoldIcon />
                <Breadcrumb>账单专项分析<i>/</i>账单初析</Breadcrumb>
                <Filler />
                <IconButton aria-label="搜索" $color="#4d5258"><MdSearch size={22} /></IconButton>
                <IconButton aria-label="全屏"><FullIcon /></IconButton>
              </TopBar>
              <TagRow>
                {tags.map((t, i) => (
                  <Tag key={t} $active={i === 2}>
                    {i === 2 && <TagDot />}
                    {t}
                    {i > 0 && <X size={10} strokeWidth={1.5} />}
                  </Tag>
                ))}
              </TagRow>
              <Panels>
                <AccountTree />
                <BillPanel />
              </Panels>
            </Content>
          </Columns>
        </AppBody>
        <PageScroll />
        {open && <TraceDialog onClose={() => setOpen(false)} />}
      </AppArea>
      <TaskBar>
        <TaskSearch>
          <svg width="16" height="4"><path d="M0 4q8-8 16 0z" fill="#a9c3c3" /></svg>
          <svg width="8" height="4"><path d="M4 0l4 4H0z" fill="#7fd3ea" /></svg>
        </TaskSearch>
        <TaskApp />
        <TaskClock>15:05</TaskClock>
        <TaskEdge />
      </TaskBar>
    </Page>
  );
};

export default App;
